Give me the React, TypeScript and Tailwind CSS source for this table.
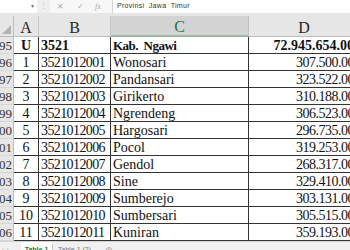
import React from "react";

type Row = { n: string; a: string; b: string; c: string; d: string; bold?: boolean };

const rows: Row[] = [
  { n: "1095", a: "U", b: "3521", c: "Kab.  Ngawi", d: "72.945.654.00", bold: true },
  { n: "1096", a: "1", b: "3521012001", c: "Wonosari", d: "307.500.00" },
  { n: "1097", a: "2", b: "3521012002", c: "Pandansari", d: "323.522.00" },
  { n: "1098", a: "3", b: "3521012003", c: "Girikerto", d: "310.188.00" },
  { n: "1099", a: "4", b: "3521012004", c: "Ngrendeng", d: "306.523.00" },
  { n: "1100", a: "5", b: "3521012005", c: "Hargosari", d: "296.735.00" },
  { n: "1101", a: "6", b: "3521012006", c: "Pocol", d: "319.253.00" },
  { n: "1102", a: "7", b: "3521012007", c: "Gendol", d: "268.317.00" },
  { n: "1103", a: "8", b: "3521012008", c: "Sine", d: "329.410.00" },
  { n: "1104", a: "9", b: "3521012009", c: "Sumberejo", d: "303.131.00" },
  { n: "1105", a: "10", b: "3521012010", c: "Sumbersari", d: "305.515.00" },
  { n: "1106", a: "11", b: "3521012011", c: "Kuniran", d: "359.193.00" },
];

const serif = "font-['Liberation_Serif',serif]";
const sans = "font-['Liberation_Sans',Arial,sans-serif]";

export default function App() {
  return (
    <div className={`w-[350px] h-[250px] overflow-hidden bg-[#e6e6e6] ${serif} text-[#111]`}>
      {/* formula bar */}
      <div className={`flex h-[13px] ${sans}`}>
        <div className="w-[37px] bg-white flex items-center justify-end pr-[3px] text-[6px] text-[#777]">▾</div>
        <div className="w-[13px] bg-[#efefef] flex items-center justify-center text-[7px] text-[#b0b0b0]">⋮</div>
        <div className="w-[62px] bg-[#f7f7f7] flex items-center text-[8px] text-[#a8a8a8]">
          <span className="ml-[7px]">✕</span>
          <span className="ml-[13px]">✓</span>
          <span className="ml-[11px] italic font-['Liberation_Serif',serif] text-[8px]">fx</span>
        </div>
        <div className="flex-1 bg-white border-l border-[#d4d4d4] flex items-center pl-[4px] text-[7px] text-[#333] tracking-[0.3px]">
          Provinsi&nbsp; Jawa&nbsp; Timur
        </div>
      </div>
      <div className="h-[3px] bg-[#e6e6e6]" />
      {/* header row */}
      <div className="grid grid-cols-[14px_25px_72px_138px_110px] h-[21px]">
        <div className="relative bg-[#e6e6e6] border-r border-b border-[#bdbdbd]">
          <div className="absolute right-[2px] bottom-[2px] w-0 h-0 border-l-[9px] border-l-transparent border-b-[9px] border-b-[#b4b4b4]" />
        </div>
        {["A", "B"].map((l) => (
          <div key={l} className="bg-[#e6e6e6] border-r border-b border-[#c8c8c8] border-b-[#bdbdbd] flex items-end justify-center text-[16px] leading-[16px] text-[#262626]">
            {l}
          </div>
        ))}
        <div className="bg-[#d3d3d3] border-r border-b-2 border-[#c0c0c0] border-b-[#9fb5a6] flex items-end justify-center text-[16px] leading-[16px] text-[#217346]">
          C
        </div>
        <div className="bg-[#e6e6e6] border-b border-[#bdbdbd] flex items-end justify-center text-[16px] leading-[16px] text-[#262626]">
          D
        </div>
      </div>
      {/* data rows */}
      {rows.map((r) => (
        <div key={r.n} className="grid grid-cols-[14px_25px_72px_138px_110px] h-[17px]">
          <div className="bg-[#e6e6e6] border-r border-b border-[#bdbdbd] border-b-[#d6d6d6] overflow-hidden flex items-center justify-end pr-[1px] text-[13px] leading-[13px] text-[#333]">
            {r.n}
          </div>
          <div className={`bg-white border-r border-b border-[#333] flex items-end justify-center text-[14px] leading-[14px] ${r.bold ? "font-bold" : ""}`}>
            {r.a}
          </div>
          <div className={`bg-white border-r border-b border-[#333] flex items-end pl-[2px] text-[14px] leading-[14px] whitespace-nowrap ${r.bold ? "font-bold" : "tracking-[-0.6px]"}`}>
            {r.b}
          </div>
          <div className={`bg-white border-r border-b border-[#333] flex items-end pl-[2px] leading-[14px] whitespace-pre ${r.bold ? "font-bold text-[13px] tracking-[-0.5px]" : "text-[14px]"}`}>
            {r.c}
          </div>
          <div className={`bg-white border-b border-[#333] flex items-end justify-end pr-[5px] text-[14px] leading-[14px] whitespace-nowrap ${r.bold ? "font-bold" : "tracking-[-0.5px]"}`}>
            {r.d}
          </div>
        </div>
      ))}
      {/* sheet tabs */}
      <div className={`flex h-[20px] bg-[#f0f0f0] border-t border-[#d4d4d4] ${sans} text-[7px]`}>
        <div className="w-[21px] flex items-start pt-[3px] pl-[2px] text-[#c0c0c0]">‹ ›</div>
        <div className="w-[31px] bg-white flex justify-center pt-[3px] font-bold text-[#217346] border-b-2 border-[#217346]">Table 1</div>
        <div className="w-[1px] bg-[#c8c8c8] my-[2px]" />
        <div className="pl-[5px] pt-[3px] text-[#777] w-[52px]">Table 1 (2)</div>
        <div className="pt-[2px] text-[9px] text-[#a0a0a0]">⊕</div>
      </div>
    </div>
  );
}
